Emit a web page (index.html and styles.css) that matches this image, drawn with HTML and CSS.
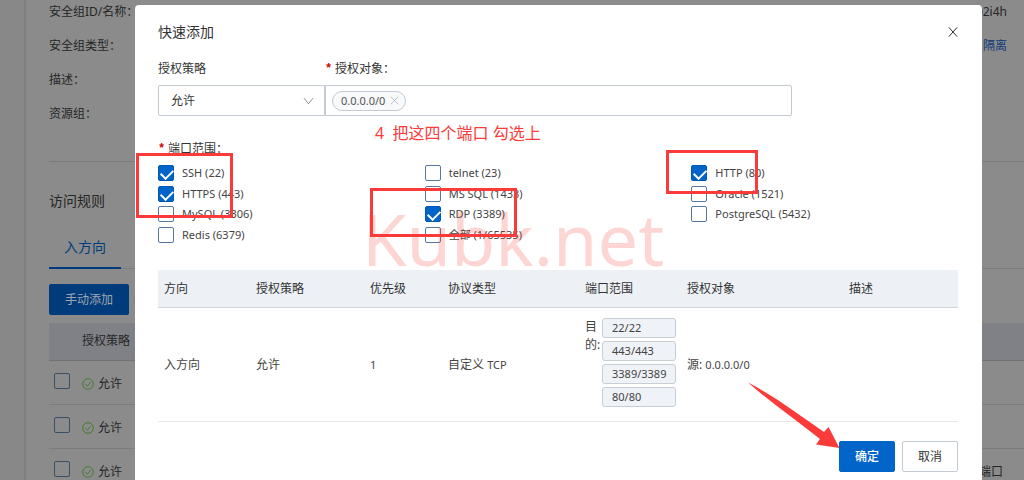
FILE: index.html
```html
<!DOCTYPE html>
<html lang="zh-CN">
<head>
<meta charset="utf-8">
<title>快速添加</title>
<link rel="stylesheet" href="styles.css">
</head>
<body>
<div class="page">
  <aside class="side"></aside>
  <main class="main">
    <section class="info">
      <div class="info-row"><span>安全组ID/名称：</span><span>02i4h</span></div>
      <div class="info-row"><span>安全组类型：</span><a class="info-link" href="#">隔离</a></div>
      <div class="info-row"><span>描述：</span></div>
      <div class="info-row"><span>资源组：</span></div>
    </section>
    <h2 class="section-title">访问规则</h2>
    <nav class="tabs"><a class="tab" href="#">入方向</a></nav>
    <div class="toolbar"><button class="btn-add" type="button">手动添加</button><span class="btn-next"></span></div>
    <table class="rules">
      <thead><tr><th class="rules-check"></th><th>授权策略</th><th></th></tr></thead>
      <tbody>
        <tr>
          <td><input class="check check-dim" type="checkbox" aria-label="允许"></td>
          <td><span class="allow"><svg class="ok" viewBox="0 0 12 12"><circle cx="6" cy="6" r="5.3"/><path d="M3.4 6.2 5.3 8l3.4-3.8"/></svg>允许</span></td>
          <td></td>
        </tr>
        <tr>
          <td><input class="check check-dim" type="checkbox" aria-label="允许"></td>
          <td><span class="allow"><svg class="ok" viewBox="0 0 12 12"><circle cx="6" cy="6" r="5.3"/><path d="M3.4 6.2 5.3 8l3.4-3.8"/></svg>允许</span></td>
          <td></td>
        </tr>
        <tr>
          <td><input class="check check-dim" type="checkbox" aria-label="允许"></td>
          <td><span class="allow"><svg class="ok" viewBox="0 0 12 12"><circle cx="6" cy="6" r="5.3"/><path d="M3.4 6.2 5.3 8l3.4-3.8"/></svg>允许</span></td>
          <td class="rules-note">端口</td>
        </tr>
      </tbody>
    </table>
  </main>
</div>

<div class="dialog" role="dialog" aria-labelledby="dialog-title">
  <header class="dialog-head">
    <h1 class="dialog-title" id="dialog-title">快速添加</h1>
    <button class="close" type="button" aria-label="关闭"><svg viewBox="0 0 10 10"><path d="M.8.3 9.2 9.7M9.2.3.8 9.7"/></svg></button>
  </header>

  <div class="fields">
    <div class="field field-policy">
      <label class="label" for="policy">授权策略</label>
      <div class="select-wrap">
        <select class="select" id="policy"><option>允许</option></select>
        <svg class="chevron" viewBox="0 0 12 8"><path d="M1 .8 6 7l5-6.2"/></svg>
      </div>
    </div>
    <div class="field field-object">
      <label class="label" for="object"><span class="star">*</span>授权对象：</label>
      <div class="token-box">
        <span class="token">0.0.0.0/0<button class="token-x" type="button" aria-label="移除"><svg viewBox="0 0 9 9"><path d="M.7.7l7.6 7.6M8.3.7.7 8.3"/></svg></button></span>
        <input class="token-input" id="object" type="text">
      </div>
    </div>
  </div>

  <div class="label label-ports"><span class="star">*</span>端口范围：</div>
  <div class="ports">
    <label class="port"><input class="check" type="checkbox" checked>SSH (22)</label>
    <label class="port"><input class="check" type="checkbox">telnet (23)</label>
    <label class="port"><input class="check" type="checkbox" checked>HTTP (80)</label>
    <label class="port"><input class="check" type="checkbox" checked>HTTPS (443)</label>
    <label class="port"><input class="check" type="checkbox">MS SQL (1433)</label>
    <label class="port"><input class="check" type="checkbox">Oracle (1521)</label>
    <label class="port"><input class="check" type="checkbox">MySQL (3306)</label>
    <label class="port"><input class="check" type="checkbox" checked>RDP (3389)</label>
    <label class="port"><input class="check" type="checkbox">PostgreSQL (5432)</label>
    <label class="port"><input class="check" type="checkbox">Redis (6379)</label>
    <label class="port"><input class="check" type="checkbox">全部 (1/65535)</label>
  </div>

  <table class="preview">
    <colgroup><col class="c1"><col class="c2"><col class="c3"><col class="c4"><col class="c5"><col class="c6"><col></colgroup>
    <thead>
      <tr><th>方向</th><th>授权策略</th><th>优先级</th><th>协议类型</th><th>端口范围</th><th>授权对象</th><th>描述</th></tr>
    </thead>
    <tbody>
      <tr>
        <td>入方向</td><td>允许</td><td><span class="latin">1</span></td><td>自定义 <span class="latin">TCP</span></td>
        <td class="dest-cell">
          <div class="dest">
            <span class="dest-label">目的:</span>
            <div class="dest-list"><span class="chip">22/22</span><span class="chip">443/443</span><span class="chip">3389/3389</span><span class="chip">80/80</span></div>
          </div>
        </td>
        <td>源: <span class="latin">0.0.0.0/0</span></td><td></td>
      </tr>
    </tbody>
  </table>

  <footer class="actions">
    <button class="btn btn-primary" type="button">确定</button>
    <button class="btn" type="button">取消</button>
  </footer>

  <div class="watermark">Kubk.net</div>
  <div class="hint">4&nbsp; 把这四个端口 勾选上</div>
  <div class="mark mark-ssh"></div>
  <div class="mark mark-rdp"></div>
  <div class="mark mark-http"></div>
  <svg class="arrow" viewBox="0 0 92 66"><path d="M0 .5C26 14 50 32 76 50l4.500-5L91.500 66 68 62.500l4-5.500C48 38 22 20 0 .5z"/></svg>
</div>
</body>
</html>
```
FILE: styles.css
```css
* { box-sizing: border-box; }

body {
  margin: 0;
  height: 100vh;
  overflow: hidden;
  position: relative;
  background: #8b8b8b;
  color: #333;
  font: 12px/20px "Noto Sans", "Noto Sans CJK SC", sans-serif;
}

button, input, select { font: inherit; color: inherit; }
a { text-decoration: none; }
svg { display: block; fill: none; stroke: currentColor; }

/* Page under the dialog */
.page { display: flex; min-height: 100vh; }
.side { width: 24px; background: #888; }
.main { flex: 1; border-left: 2px solid #808080; padding-left: 23px; color: #262626; }
.info { display: flex; flex-direction: column; padding-bottom: 30px; margin-top: -5px; border-bottom: 1px solid #7c7c7c; }
.info-row { display: flex; justify-content: space-between; line-height: 34px; padding-right: 17px; }
.info-link { color: #103c78; }
.section-title { margin: 0; padding-top: 29px; font-size: 14px; font-weight: 400; line-height: 20px; }
.tabs { display: flex; margin-top: 16px; border-bottom: 1px solid #7c7c7c; }
.tab { padding: 10px 15px; border-bottom: 2px solid #003c7c; margin-bottom: -1px; font-size: 14px; color: #003c7c; }
.toolbar { display: flex; gap: 5px; margin-top: 15px; }
.btn-add { height: 31px; padding: 0 16px; border: 0; border-radius: 2px; background: #003c7c; color: #a0a6ae; }
.btn-next { width: 20px; margin: 11px 0; background: #808080; }
.rules { width: 100%; margin-top: 8px; border-collapse: collapse; }
.rules th { height: 37px; padding: 0; text-align: left; font-weight: 400; background: #7f8187; border-bottom: 1px solid #707276; }
.rules th:nth-child(2) { width: 100px; }
.rules td { height: 44px; padding: 4px 0 0; border-bottom: 1px solid #7c7c7c; }
.rules .rules-check { width: 33px; }
.rules td:first-child { padding: 0 0 3px 5px; }
.rules .rules-note { text-align: right; padding-right: 21px; }
.allow { display: flex; align-items: center; gap: 4px; }
.ok { width: 12px; height: 12px; color: #3f7d2c; }

/* Checkbox */
.check {
  appearance: none;
  display: block;
  flex: none;
  width: 16px;
  height: 16px;
  margin: 0;
  border: 1px solid #56779f;
  border-radius: 2px;
  background: #fff;
}
.check:checked { border-color: #0058b5; background: #0064c8; }
.check:checked::before {
  content: "";
  display: block;
  width: 10px;
  height: 6px;
  margin: 3px 2px;
  border-left: 2px solid #fff;
  border-bottom: 2px solid #fff;
  transform: rotate(-45deg);
}
.check-dim { border-color: #3c4e64; background: #8b8b8b; }

/* Dialog */
.dialog {
  position: absolute;
  top: 5px;
  left: 135px;
  right: 42px;
  min-height: 100%;
  padding: 17px 24px 17px 23px;
  border-radius: 4px;
  background: #fff;
}
.dialog-head { display: flex; align-items: center; justify-content: space-between; }
.dialog-title { margin: 0; font-size: 14px; line-height: 20px; font-weight: 400; }
.close { width: 10px; padding: 0; border: 0; background: none; }
.close svg { width: 10px; height: 10px; }

.fields { display: flex; margin-top: 17px; }
.field-policy { flex: 0 0 167px; }
.field-object { flex: 0 1 467px; }
.label { display: flex; align-items: center; height: 20px; }
.star { width: 10px; color: #c00; font-family: "Liberation Mono", monospace; font-weight: 700; }
.label-ports { margin-top: 23px; }

.select-wrap { position: relative; margin-top: 6px; }
.select {
  appearance: none;
  display: block;
  width: 100%;
  height: 31px;
  padding: 0 12px;
  border: 1px solid #c3cad2;
  border-radius: 2px 0 0 2px;
  background: #fff;
}
.chevron { position: absolute; right: 11px; top: 12px; width: 11px; height: 8px; color: #888; }
.token-box { display: flex; align-items: center; height: 31px; margin-top: 6px; padding: 0 6px; border: 1px solid #c3cad2; border-radius: 0 2px 2px 0; }
.token { display: flex; align-items: center; gap: 5px; height: 20px; padding: 0 6px 0 8px; border: 1px solid #c3cad2; border-radius: 10px; background: #f7f9fa; font-size: 11px; color: #555; }
.token-x { padding: 0; border: 0; background: none; color: #c0c4c8; }
.token-x svg { width: 9px; height: 9px; }
.token-input { flex: 1; min-width: 0; border: 0; outline: 0; background: none; }

.ports { display: grid; grid-template-columns: repeat(3, 1fr); grid-auto-rows: 1fr; height: 82px; margin-top: 4px; }
.port { display: flex; align-items: center; gap: 8px; font-size: 11px; color: #444; }
.latin { font-size: 11px; }

.preview { width: 100%; margin-top: 25px; table-layout: fixed; border-collapse: separate; border-spacing: 0; }
.c1 { width: 92px; }
.c2 { width: 114px; }
.c3 { width: 78px; }
.c4 { width: 137px; }
.c5 { width: 102px; }
.c6 { width: 162px; }
.preview th { height: 38px; padding: 0 6px; text-align: left; font-weight: 400; background: #edf1f6; border-bottom: 1px solid #d3d7dc; }
.preview td { height: 114px; padding: 0 6px; border-bottom: 1px solid #e8e8e8; color: #444; }
.preview .dest-cell { padding-bottom: 5px; }
.dest { display: flex; }
.dest-label { flex: 0 0 17px; line-height: 18px; }
.dest-list { flex: 1; display: flex; flex-direction: column; gap: 3px; }
.chip { height: 20px; padding: 0 9px; border: 1px solid #c8ced6; border-radius: 3px; background: #eff2f7; font-size: 11px; line-height: 18px; }

.actions { display: flex; justify-content: flex-end; gap: 7px; margin-top: 19px; }
.btn { height: 31px; padding: 0 15px; border: 1px solid #c3cad2; border-radius: 2px; background: #fff; }
.btn-primary { border-color: #0064c8; background: #0064c8; color: #fff; font-weight: 500; }

/* Annotations drawn over the dialog */
.watermark { position: absolute; left: 227px; top: 197px; font-size: 72px; line-height: 72px; color: rgba(244, 67, 54, .22); pointer-events: none; }
.hint { position: absolute; left: 240px; top: 118px; font-size: 16px; line-height: 20px; color: #fb3a3a; white-space: nowrap; }
.mark { position: absolute; border: 3px solid #fb3a3a; pointer-events: none; }
.mark-ssh { left: 1px; top: 148px; width: 97px; height: 65px; }
.mark-rdp { left: 235px; top: 183px; width: 147px; height: 49px; }
.mark-http { left: 531px; top: 145px; width: 92px; height: 44px; }
.arrow { position: absolute; left: 613px; top: 377px; width: 92px; height: 66px; fill: #fb3a3a; stroke: none; pointer-events: none; }
```
